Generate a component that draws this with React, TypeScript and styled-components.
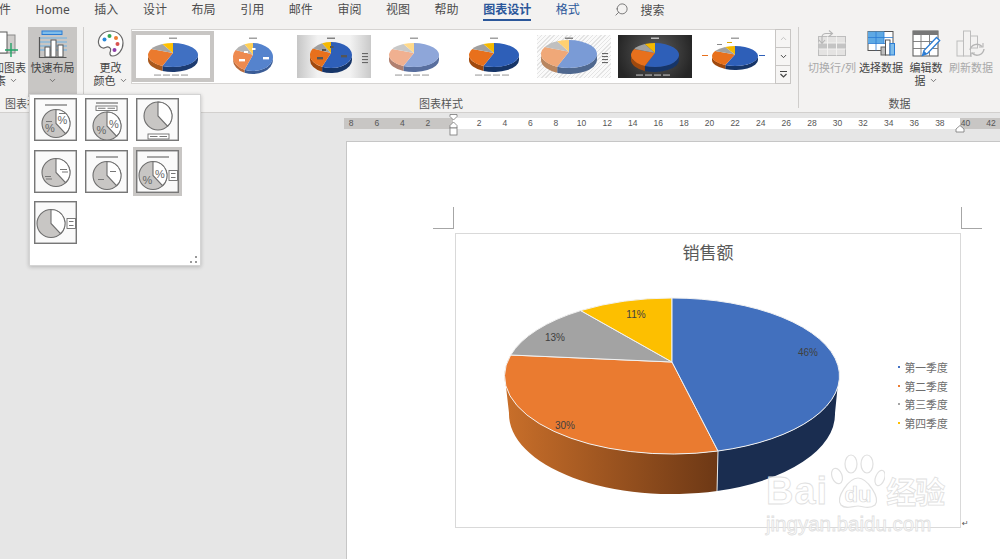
import React from "react";
import styled, { createGlobalStyle } from "styled-components";
import { ChevronDown, Search } from "lucide-react";

const GlobalStyle = createGlobalStyle`
  html, body {
    margin: 0;
    padding: 0;
    background: #e6e6e6;
    font-family: "Noto Sans", "Noto Sans CJK SC", sans-serif;
  }
`;

const Root = styled.div`
  position: relative;
  width: 1000px;
  height: 559px;
  overflow: hidden;
  display: flex;
  flex-direction: column;
  background: #e6e6e6;
`;

/* tabs */
const TabBar = styled.div`
  height: 27px;
  flex: none;
  display: flex;
  align-items: flex-start;
  gap: 24.6px;
  margin-left: -1px;
  background: #f3f2f1;
`;

const Tab = styled.div<{ $active?: boolean; $blue?: boolean }>`
  height: 19px;
  line-height: 19px;
  font-size: 12px;
  white-space: nowrap;
  color: ${(p) => (p.$active || p.$blue ? "#2b579a" : "#4d4d4d")};
  font-weight: ${(p) => (p.$active ? 600 : 400)};
  border-bottom: ${(p) => (p.$active ? "2.5px solid #2b579a" : "2.5px solid transparent")};
`;

const SearchBox = styled.div`
  display: flex;
  align-items: center;
  gap: 11px;
  height: 19px;
  margin-left: 10px;
  font-size: 12px;
  color: #4d4d4d;
  svg {
    transform: scaleX(-1);
    color: #6a6a6a;
  }
`;

/* ribbon */
const Ribbon = styled.div`
  height: 85px;
  flex: none;
  display: flex;
  background: #f3f2f1;
  border-bottom: 1px solid #d2d0ce;
`;

const Group = styled.div<{ $width: number }>`
  width: ${(p) => p.$width}px;
  flex: none;
  display: flex;
  flex-direction: column;
`;

const GroupBody = styled.div<{ $pad?: number }>`
  height: 70px;
  display: flex;
  align-items: flex-start;
  padding-left: ${(p) => p.$pad ?? 0}px;
`;

const GroupLabel = styled.div<{ $align?: string }>`
  height: 15px;
  line-height: 14px;
  font-size: 11px;
  color: #555;
  text-align: ${(p) => p.$align ?? "center"};
  padding-left: ${(p) => (p.$align === "left" ? 5 : 0)}px;
`;

const Divider = styled.div`
  width: 1px;
  height: 81px;
  flex: none;
  background: #cfcdcb;
`;

const ToolButton = styled.div<{ $width: number; $on?: boolean; $off?: boolean; $clip?: boolean }>`
  width: ${(p) => p.$width}px;
  height: ${(p) => (p.$on ? 70 : 66)}px;
  flex: none;
  display: flex;
  flex-direction: column;
  align-items: ${(p) => (p.$clip ? "flex-end" : "center")};
  padding-top: 3px;
  box-sizing: border-box;
  margin-left: ${(p) => (p.$clip ? -20 : 0)}px;
  background: ${(p) => (p.$on ? "#c8c6c4" : "transparent")};
  color: ${(p) => (p.$off ? "#a9a9a9" : "#444")};
`;

const IconSlot = styled.div<{ $clip?: boolean }>`
  height: 31px;
  display: flex;
  justify-content: center;
  align-self: ${(p) => (p.$clip ? "flex-start" : "center")};
`;

const ButtonLine = styled.div<{ $right?: number }>`
  display: flex;
  align-items: center;
  justify-content: center;
  gap: 3px;
  height: 13px;
  line-height: 13px;
  font-size: 11px;
  white-space: nowrap;
  margin-right: ${(p) => p.$right ?? 0}px;
  svg {
    color: #555;
  }
`;

/* style gallery */
const Gallery = styled.div`
  display: flex;
  margin: 2px 0 0 2px;
  height: 55px;
`;

const GalleryTrack = styled.div`
  width: 645px;
  box-sizing: border-box;
  display: flex;
  align-items: flex-start;
  gap: 6.3px;
  padding: 5px 0 0 4px;
  background: #fff;
  border: 1px solid #d6d4d2;
`;

const Thumb = styled.div<{ $bg: string; $selected?: boolean }>`
  width: 74px;
  height: 43px;
  flex: none;
  background: ${(p) => p.$bg};
  outline: ${(p) => (p.$selected ? "4px solid #c8c6c4" : "none")};
  svg {
    display: block;
  }
`;

const GalleryScroll = styled.div`
  width: 13px;
  display: flex;
  flex-direction: column;
`;

const ScrollButton = styled.div<{ $off?: boolean }>`
  flex: 1;
  display: flex;
  align-items: center;
  justify-content: center;
  margin-left: -1px;
  width: 14px;
  border: 1px solid #c8c6c4;
  border-top-width: ${(p) => (p.$off ? 1 : 0)}px;
  color: ${(p) => (p.$off ? "#b5b5b5" : "#444")};
  background: #f6f5f4;
`;

/* layout popup */
const LayoutPopup = styled.div`
  position: absolute;
  left: 29px;
  top: 94px;
  width: 172px;
  height: 172px;
  box-sizing: border-box;
  padding: 3px 4px;
  background: #fff;
  border: 1px solid #d4d4d4;
  box-shadow: 0 1px 4px rgba(0, 0, 0, 0.22);
  display: grid;
  grid-template-columns: repeat(3, 43px);
  grid-auto-rows: 43px;
  gap: 8.5px 8px;
  align-content: start;
`;

const LayoutItem = styled.div<{ $selected?: boolean }>`
  width: 43px;
  height: 43px;
  box-sizing: border-box;
  background: #fafafa;
  border: 1px solid #777;
  outline: ${(p) => (p.$selected ? "3px solid #c8c6c4" : "none")};
  box-shadow: inset 0 0 0 0.5px #888;
  svg {
    display: block;
  }
`;

const Grip = styled.div`
  position: absolute;
  right: 3px;
  bottom: 2px;
  width: 7px;
  height: 7px;
  background:
    radial-gradient(circle, #999 1px, transparent 1.2px) 5px 0 / 2px 2px no-repeat,
    radial-gradient(circle, #999 1px, transparent 1.2px) 0 5px / 2px 2px no-repeat,
    radial-gradient(circle, #999 1px, transparent 1.2px) 5px 5px / 2px 2px no-repeat;
`;

/* ruler */
const RulerBar = styled.div`
  position: relative;
  height: 28px;
  flex: none;
  padding: 5px 0 0 344px;
  box-sizing: border-box;
`;

const Ruler = styled.div`
  height: 11px;
  overflow: hidden;
  background: linear-gradient(90deg, #c8c6c4 109px, #fff 109px, #fff 616px, #c8c6c4 616px);
`;

const RulerScale = styled.div`
  display: flex;
  margin-left: -5.6px;
`;

const RulerCell = styled.div`
  width: 25.6px;
  flex: none;
  text-align: center;
  font-family: "Liberation Sans", sans-serif;
  font-size: 8.5px;
  line-height: 11px;
  color: #555;
`;

const RulerMark = styled.svg<{ $left: number; $top: number }>`
  position: absolute;
  left: ${(p) => p.$left}px;
  top: ${(p) => p.$top}px;
`;

/* page and chart */
const Workspace = styled.div`
  flex: 1;
  min-height: 0;
  padding-left: 346px;
`;

const Page = styled.div`
  height: 100%;
  box-sizing: border-box;
  padding: 65px 0 0 86px;
  background: #fff;
  border-left: 1px solid #c6c6c6;
  border-top: 1px solid #c6c6c6;
`;

const CornerRow = styled.div`
  width: 549px;
  display: flex;
  justify-content: space-between;
`;

const Corner = styled.div<{ $side: "left" | "right" }>`
  width: 20px;
  height: 21px;
  border-bottom: 1px solid #a6a6a6;
  border-${(p) => (p.$side === "left" ? "right" : "left")}: 1px solid #a6a6a6;
`;

const ChartRow = styled.div`
  display: flex;
  align-items: flex-end;
  margin: 4px 0 0 22px;
`;

const ChartFrame = styled.div`
  width: 506px;
  height: 295px;
  box-sizing: border-box;
  border: 1px solid #d9d9d9;
`;

const ChartTitle = styled.div`
  margin-top: 6px;
  height: 26px;
  line-height: 26px;
  text-align: center;
  font-size: 17px;
  color: #595959;
`;

const ChartBody = styled.div`
  display: flex;
  align-items: flex-start;
  margin-top: 24px;
  svg {
    display: block;
    flex: none;
  }
`;

const Legend = styled.div`
  margin: 68px 0 0 2px;
  display: flex;
  flex-direction: column;
`;

const LegendItem = styled.div<{ $color: string }>`
  display: flex;
  align-items: center;
  gap: 4.5px;
  height: 18.6px;
  font-size: 10.8px;
  color: #6e6e6e;
  white-space: nowrap;
  &::before {
    content: "";
    width: 2px;
    height: 2px;
    background: ${(p) => p.$color};
  }
`;

const PieLabel = styled.text`
  font-family: "Liberation Sans", sans-serif;
  font-size: 10px;
  fill: #404040;
  text-anchor: middle;
`;

const ReturnMark = styled.div`
  font-family: "DejaVu Sans", sans-serif;
  font-size: 8px;
  line-height: 9px;
  color: #555;
  margin-left: 1px;
`;

/* watermark */
const Watermark = styled.div`
  position: absolute;
  left: 766px;
  top: 452px;
  width: 182px;
  color: rgba(255, 255, 255, 0.55);
  -webkit-text-stroke: 0.8px #e0e0e0;
  pointer-events: none;
`;

const WatermarkTop = styled.div`
  display: flex;
  align-items: flex-end;
  height: 58px;
  svg {
    flex: none;
    margin: 0 1px 0 3px;
  }
`;

const WatermarkBai = styled.div`
  font-family: "Liberation Sans", sans-serif;
  font-weight: 700;
  font-size: 38px;
  line-height: 38px;
  letter-spacing: 1px;
`;

const WatermarkJing = styled.div`
  font-size: 30px;
  line-height: 36px;
  font-weight: 700;
  letter-spacing: -1px;
  white-space: nowrap;
`;

const WatermarkUrl = styled.div`
  margin-top: 3px;
  font-family: "Liberation Sans", sans-serif;
  font-size: 20.5px;
  line-height: 22px;
  white-space: nowrap;
`;

/* drawing helpers */
const pt = (cx: number, cy: number, rx: number, ry: number, a: number) => {
  const r = (a * Math.PI) / 180;
  return [cx + rx * Math.sin(r), cy - ry * Math.cos(r)];
};

// the apex sits above the ellipse centre, like the tilted pie in the big chart
const slicePath = (cx: number, cy: number, rx: number, ry: number, a0: number, a1: number) => {
  const [x0, y0] = pt(cx, cy, rx, ry, a0);
  const [x1, y1] = pt(cx, cy, rx, ry, a1);
  const apex = cy - ry * 0.16;
  return `M${cx} ${apex}L${x0} ${y0}A${rx} ${ry} 0 ${a1 - a0 > 180 ? 1 : 0} 1 ${x1} ${y1}Z`;
};

const sidePath = (cx: number, cy: number, rx: number, ry: number, d: number, a0: number, a1: number) => {
  const [x0, y0] = pt(cx, cy, rx, ry, a0);
  const [x1, y1] = pt(cx, cy, rx, ry, a1);
  return `M${x0} ${y0}A${rx} ${ry} 0 0 1 ${x1} ${y1}L${x1} ${y1 + d}A${rx} ${ry} 0 0 0 ${x0} ${y0 + d}Z`;
};

type ThumbSpec = {
  bg: string;
  cx: number;
  cy: number;
  rx: number;
  ry: number;
  depth: number;
  colors: string[];
  sides: string[];
  text: string;
  legend: "bottom" | "right" | "none" | "sides";
  boxes?: string;
  selected?: boolean;
};

const solid = ["#3f6fc2", "#ea7a2f", "#a5a5a5", "#ffc000"];
const solidSide = ["#1f3a70", "#a9591f"];
const deep = ["#2f5fb8", "#e8701a", "#a0a0a0", "#f4b800"];
const deepSide = ["#173468", "#a04a10"];

const thumbs: ThumbSpec[] = [
  { bg: "#fff", cx: 37, cy: 20, rx: 25, ry: 12, depth: 5, colors: solid, sides: solidSide, text: "#8a8a8a", legend: "bottom", selected: true },
  { bg: "#fff", cx: 37, cy: 22, rx: 20, ry: 14, depth: 3, colors: ["#5583cd", "#ee8a50", "#b5b5b5", "#ffcf55"], sides: ["#3a5c96", "#b96a3a"], text: "#8a8a8a", legend: "none", boxes: "#fff" },
  { bg: "linear-gradient(90deg, #c6c6c6, #f2f2f2 28%, #f2f2f2 72%, #c9c9c9)", cx: 34, cy: 20, rx: 21, ry: 13, depth: 5, colors: deep, sides: deepSide, text: "#666", legend: "right", boxes: "#555" },
  { bg: "#fff", cx: 37, cy: 20, rx: 25, ry: 12, depth: 5, colors: ["#8ea6d9", "#f0b090", "#c8c8c8", "#ffd98a"], sides: ["#586e9e", "#b08070"], text: "#8a8a8a", legend: "bottom" },
  { bg: "#fff", cx: 37, cy: 20, rx: 25, ry: 12, depth: 5, colors: deep, sides: deepSide, text: "#8a8a8a", legend: "bottom" },
  { bg: "repeating-linear-gradient(135deg, #e4e4e4 0 1px, #fafafa 1px 3px)", cx: 32, cy: 19, rx: 28, ry: 14, depth: 6, colors: ["#7a9bd6", "#f0a878", "#c0c0c0", "#ffd070"], sides: ["#50688f", "#b88660"], text: "#666", legend: "right" },
  { bg: "radial-gradient(circle at 50% 40%, #5c5c5c, #262626 85%)", cx: 37, cy: 20, rx: 24, ry: 12, depth: 5, colors: deep, sides: deepSide, text: "#ddd", legend: "bottom" },
  { bg: "#fff", cx: 37, cy: 21, rx: 23, ry: 10, depth: 4, colors: deep, sides: deepSide, text: "#8a8a8a", legend: "sides" },
];

const MiniChart = ({ spec }: { spec: ThumbSpec }) => {
  const { cx, cy, rx, ry, depth, colors, sides, text, legend, boxes } = spec;
  const angles = [0, 205, 300, 335, 360];
  return (
    <svg width="74" height="43" viewBox="0 0 74 43">
      <defs>
        <filter id="soft" x="-10%" y="-10%" width="120%" height="120%">
          <feGaussianBlur stdDeviation="0.3" />
        </filter>
      </defs>
      <g filter="url(#soft)">
        <rect x={cx - 4} y="2.6" width="8" height="1.2" fill={text} />
        <path d={sidePath(cx, cy, rx, ry, depth, 90, 205)} fill={sides[0]} />
        <path d={sidePath(cx, cy, rx, ry, depth, 205, 270)} fill={sides[1]} />
        {colors.map((c, i) => (
          <path key={c} d={slicePath(cx, cy, rx, ry, angles[i], angles[i + 1])} fill={c} />
        ))}
        {boxes && (
          <g fill={boxes}>
            <rect x={cx + 10} y={cy} width="6" height="2.4" />
            <rect x={cx - 14} y={cy + 2} width="6" height="2.4" />
            <rect x={cx - 9} y={cy - 6} width="4" height="2" />
            <rect x={cx - 1} y={cy - 9} width="3.5" height="2" />
          </g>
        )}
        {legend === "bottom" &&
          [18, 27, 36, 45].map((x) => <rect key={x} x={x} y="39.6" width="7" height="0.9" fill={text} />)}
        {legend === "right" &&
          [18, 21, 24, 27].map((y) => <rect key={y} x="65" y={y} width="6" height="1.1" fill={text} />)}
        {legend === "sides" && (
          <g fill={text}>
            <rect x="4" y="20" width="6" height="1" fill="#e8701a" />
            <rect x="61" y="20" width="6" height="1" fill="#2f5fb8" />
            <rect x="19" y="9" width="5" height="1" />
            <rect x="29" y="7" width="5" height="1" fill="#e0a800" />
          </g>
        )}
      </g>
    </svg>
  );
};

/* layout gallery glyphs */
const frameColor = "#6e6e6e";

const PieGlyph = ({ cx, cy, r = 14 }: { cx: number; cy: number; r?: number }) => {
  const a = (137 * Math.PI) / 180;
  return (
    <>
      <circle cx={cx} cy={cy} r={r} fill="#c8c6c4" stroke={frameColor} strokeWidth="1.1" />
      <path
        d={`M${cx} ${cy}L${cx} ${cy - r}A${r} ${r} 0 0 1 ${cx + r * Math.sin(a)} ${cy - r * Math.cos(a)}Z`}
        fill="#fff"
        stroke={frameColor}
        strokeWidth="1.1"
      />
    </>
  );
};

const TitleBar = ({ y = 5 }: { y?: number }) => <rect x="10" y={y} width="22" height="2" fill="#a6a6a6" />;

const Pct = ({ x, y }: { x: number; y: number }) => (
  <text x={x} y={y} fontFamily="Liberation Sans, sans-serif" fontSize="11" fill="#666" textAnchor="middle">
    %
  </text>
);

const LegendBox = ({ x, y, w, h, tall }: { x: number; y: number; w: number; h: number; tall?: boolean }) => (
  <g>
    <rect x={x} y={y} width={w} height={h} fill="#fff" stroke={frameColor} strokeWidth="0.9" />
    {tall ? (
      <g fill="#777">
        <rect x={x + 2} y={y + 2.5} width={w - 4} height="1" />
        <rect x={x + 2} y={y + h - 3.5} width={w - 4} height="1" />
      </g>
    ) : (
      <g fill="#777">
        <rect x={x + 2} y={y + h / 2 - 0.5} width={w / 2 - 3} height="1" />
        <rect x={x + w / 2 + 1} y={y + h / 2 - 0.5} width={w / 2 - 3} height="1" />
      </g>
    )}
  </g>
);

const layoutGlyphs: React.ReactNode[] = [
  <>
    <TitleBar />
    <PieGlyph cx={21} cy={24.5} />
    <Pct x={15} y={33} />
    <Pct x={27.5} y={25} />
    <rect x="11" y="22" width="6" height="1" fill="#777" />
    <rect x="24" y="14" width="6" height="1" fill="#777" />
  </>,
  <>
    <TitleBar y={3} />
    <LegendBox x={10} y={7} w={21} h={4.5} />
    <PieGlyph cx={21} cy={27} />
    <Pct x={15.5} y={35} />
    <Pct x={28} y={29} />
  </>,
  <>
    <PieGlyph cx={21} cy={17} />
    <LegendBox x={11} y={35} w={21} h={5} />
  </>,
  <>
    <PieGlyph cx={21} cy={21.5} />
    <rect x="25" y="18" width="7" height="1" fill="#777" />
    <rect x="27" y="20.5" width="6" height="1" fill="#777" />
    <rect x="10" y="25" width="6" height="1" fill="#777" />
    <rect x="11" y="27.5" width="6" height="1" fill="#777" />
  </>,
  <>
    <TitleBar />
    <PieGlyph cx={21} cy={24.5} />
    <rect x="24" y="20" width="6" height="1" fill="#777" />
    <rect x="12" y="28" width="6" height="1" fill="#777" />
  </>,
  <>
    <TitleBar />
    <PieGlyph cx={16} cy={24.5} />
    <Pct x={10.5} y={33} />
    <Pct x={23} y={27} />
    <LegendBox x={32} y={19.5} w={8.5} h={10} tall />
  </>,
  <>
    <PieGlyph cx={16} cy={21.5} />
    <LegendBox x={32} y={16.5} w={8.5} h={10} tall />
  </>,
];

/* ribbon icons */
const AddElementIcon = () => (
  <svg width="40" height="30" viewBox="0 0 40 30">
    <rect x="20" y="5" width="15" height="18" fill="#cfcdcb" stroke="#8a8a8a" />
    <rect x="10" y="2" width="17" height="21" fill="#fff" stroke="#5a5a5a" />
    <path d="M31 13v14M25 20h13" stroke="#21a366" strokeWidth="1.4" fill="none" />
  </svg>
);

const QuickLayoutIcon = () => (
  <svg width="30" height="29" viewBox="0 0 30 29">
    <rect x="4" y="1" width="20" height="3.5" fill="#7fbdea" stroke="#2b7cd3" />
    <path d="M2 8h27M2 12h27M2 16h27M2 20h27" stroke="#6cb2e6" strokeWidth="1.2" />
    <path d="M1.5 7v20.5h27" stroke="#555" strokeWidth="1.2" fill="none" />
    <rect x="7" y="17" width="5" height="10" fill="#fff" stroke="#555" />
    <rect x="13" y="10" width="5" height="17" fill="#fff" stroke="#555" />
    <rect x="20" y="15" width="5" height="12" fill="#fff" stroke="#555" />
  </svg>
);

const PaletteIcon = () => (
  <svg width="27" height="27" viewBox="0 0 27 27">
    <path
      d="M13.5 1C20.5 1 26 6 26 13C26 20 21 26 15.5 26C12.5 26 12.5 23 13.5 21C14.5 18 11.5 16 8.5 17.5C5.5 19 2 17 1.5 13C1 6 7 1 13.5 1Z"
      fill="#fff"
      stroke="#666"
      strokeWidth="1.2"
    />
    <circle cx="7.5" cy="9.5" r="2" fill="#2b88d8" />
    <circle cx="12.5" cy="6" r="2" fill="#33a853" />
    <circle cx="19" cy="8" r="2" fill="#ed7d31" />
    <circle cx="20.5" cy="14" r="2" fill="#d9534f" />
    <circle cx="17.5" cy="20" r="2" fill="#8e3ea8" />
  </svg>
);

const SwitchRowIcon = () => (
  <svg width="30" height="26" viewBox="0 0 30 26">
    <rect x="1.5" y="6.5" width="27" height="19" fill="#e4e3e2" stroke="#bdbdbd" />
    <rect x="1.5" y="13" width="27" height="6" fill="#c4c4c4" />
    <path d="M1.5 13h27M1.5 19h27M10.5 6.5v19M19.5 6.5v19" stroke="#f3f2f1" />
    <path d="M5 13V7c0-2 2-3.5 4-3.5h6M12 .5l3.5 3-3.5 3M2 10l3 3.5L8 10" stroke="#b5b5b5" strokeWidth="1.1" fill="none" />
  </svg>
);

const SelectDataIcon = () => (
  <svg width="29" height="26" viewBox="0 0 29 26">
    <rect x="1" y="1.5" width="25" height="19" fill="#fff" stroke="#555" />
    <rect x="1" y="1.5" width="16" height="12" fill="#5ea9e4" />
    <path d="M1 7.5h25M1 13.5h25M9 1.5v19M17 1.5v12" stroke="#2b7cd3" strokeWidth="0.8" />
    <rect x="14" y="17" width="4.5" height="8" fill="#bdbdbd" stroke="#666" />
    <rect x="18.5" y="10" width="4.5" height="15" fill="#fff" stroke="#555" />
    <rect x="23" y="13.5" width="4.5" height="11.5" fill="#7fbdea" stroke="#2b7cd3" />
  </svg>
);

const EditDataIcon = () => (
  <svg width="29" height="28" viewBox="0 0 29 28">
    <rect x="1" y="1" width="25" height="25" fill="#fff" stroke="#555" />
    <rect x="1" y="1" width="25" height="4" fill="#777" />
    <path d="M1 11.5h25M1 18.5h25M9 5v21M17.5 5v21" stroke="#777" strokeWidth="0.9" />
    <path d="M24.5 7.5l3.2 3-12.2 13-5 2 1.5-5z" fill="#fff" stroke="#2b7cd3" strokeWidth="1.3" />
    <path d="M11.8 20.8l3.4 3-4.4 1.7z" fill="#2b7cd3" />
  </svg>
);

const RefreshDataIcon = () => (
  <svg width="30" height="27" viewBox="0 0 30 27">
    <rect x="1" y="11" width="6.5" height="15" fill="#f3f2f1" stroke="#bdbdbd" />
    <rect x="7.5" y="1" width="7" height="25" fill="#f3f2f1" stroke="#bdbdbd" />
    <rect x="14.5" y="6" width="7" height="12" fill="#f3f2f1" stroke="#bdbdbd" />
    <path d="M14 20a7 7 0 0 1 12-3.5M28 19a7 7 0 0 1-12 4" fill="none" stroke="#b5b5b5" strokeWidth="1.4" />
    <path d="M27 13v4h-4M15 27v-4h4" fill="none" stroke="#b5b5b5" strokeWidth="1.1" />
  </svg>
);

/* big chart */
const MainPie = () => (
  <svg width="440" height="210" viewBox="456 290 440 210">
    <defs>
      <linearGradient id="orangeSide" x1="505" x2="718" y1="0" y2="0" gradientUnits="userSpaceOnUse">
        <stop offset="0" stopColor="#c96f2a" />
        <stop offset="1" stopColor="#6d3815" />
      </linearGradient>
    </defs>
    <path d="M505 378A167.5 78 0 0 0 718 451L717 491A163 80 0 0 1 509 413Z" fill="url(#orangeSide)" />
    <path d="M837.5 388A167.5 78 0 0 1 718 451L717 491A163 80 0 0 0 835 413Z" fill="#1a2d50" />
    <path d="M718 451L717 491" stroke="#e8e8e8" strokeWidth="1" />
    <g stroke="#f2f2f2" strokeWidth="1">
      <path d="M672 362L718 451A167.5 78 0 0 1 510.7 355Z" fill="#ea7b30" />
      <path d="M672 362L510.7 355A167.5 78 0 0 1 580.7 310.6Z" fill="#a3a3a3" />
      <path d="M672 362L580.7 310.6A167.5 78 0 0 1 672 298Z" fill="#fdbf00" />
      <path d="M672 362L672 298A167.5 78 0 0 1 718 451Z" fill="#4270be" />
    </g>
    <PieLabel x="808" y="356">46%</PieLabel>
    <PieLabel x="565" y="429">30%</PieLabel>
    <PieLabel x="555" y="341">13%</PieLabel>
    <PieLabel x="636" y="318">11%</PieLabel>
  </svg>
);

const Paw = () => (
  <svg width="54" height="56" viewBox="0 0 54 56">
    <g fill="rgba(255,255,255,0.5)" stroke="#e0e0e0" strokeWidth="1.2">
      <ellipse cx="6" cy="22" rx="5" ry="8" transform="rotate(-20 6 22)" />
      <ellipse cx="20" cy="10" rx="6" ry="9" />
      <ellipse cx="36" cy="10" rx="6" ry="9" />
      <ellipse cx="49" cy="24" rx="4.5" ry="8" transform="rotate(20 49 24)" />
      <path d="M27 24C36 24 50 44 44 51C38 56 32 52 27 52C22 52 15 56 10 51C4 44 18 24 27 24Z" />
    </g>
    <text x="27" y="48" textAnchor="middle" fontFamily="Liberation Sans, sans-serif" fontWeight="700" fontSize="22" fill="rgba(255,255,255,0.4)" stroke="#d8d8d8" strokeWidth="0.7">
      du
    </text>
  </svg>
);

const rulerLabels = ["8", "6", "4", "2", "", "2", "4", "6", "8", "10", "12", "14", "16", "18", "20", "22", "24", "26", "28", "30", "32", "34", "36", "38", "40", "42"];
const legendRows = [
  { name: "第一季度", color: "#4472c4" },
  { name: "第二季度", color: "#ed7d31" },
  { name: "第三季度", color: "#a5a5a5" },
  { name: "第四季度", color: "#ffc000" },
];

const Chev = () => <ChevronDown size={9} strokeWidth={2} />;

export default function App() {
  return (
    <Root>
      <GlobalStyle />
      <TabBar>
        <Tab>件</Tab>
        <Tab>Home</Tab>
        <Tab>插入</Tab>
        <Tab>设计</Tab>
        <Tab>布局</Tab>
        <Tab>引用</Tab>
        <Tab>邮件</Tab>
        <Tab>审阅</Tab>
        <Tab>视图</Tab>
        <Tab>帮助</Tab>
        <Tab $active>图表设计</Tab>
        <Tab $blue>格式</Tab>
        <SearchBox>
          <Search size={15} strokeWidth={1.4} />
          搜索
        </SearchBox>
      </TabBar>

      <Ribbon>
        <Group $width={83}>
          <GroupBody>
            <ToolButton $width={48} $clip>
              <IconSlot $clip>
                <AddElementIcon />
              </IconSlot>
              <ButtonLine $right={2}>添加图表</ButtonLine>
              <ButtonLine $right={10}>
                元素 <Chev />
              </ButtonLine>
            </ToolButton>
            <ToolButton $width={49} $on>
              <IconSlot>
                <QuickLayoutIcon />
              </IconSlot>
              <ButtonLine>快速布局</ButtonLine>
              <ButtonLine>
                <Chev />
              </ButtonLine>
            </ToolButton>
          </GroupBody>
          <GroupLabel $align="left">图表布局</GroupLabel>
        </Group>
        <Divider />
        <Group $width={714}>
          <GroupBody $pad={8}>
            <ToolButton $width={37}>
              <IconSlot>
                <PaletteIcon />
              </IconSlot>
              <ButtonLine>更改</ButtonLine>
              <ButtonLine>
                颜色 <Chev />
              </ButtonLine>
            </ToolButton>
            <Gallery>
              <GalleryTrack>
                {thumbs.map((t, i) => (
                  <Thumb key={i} $bg={t.bg} $selected={t.selected}>
                    <MiniChart spec={t} />
                  </Thumb>
                ))}
              </GalleryTrack>
              <GalleryScroll>
                <ScrollButton $off>
                  <ChevronDown size={9} style={{ transform: "rotate(180deg)" }} />
                </ScrollButton>
                <ScrollButton>
                  <ChevronDown size={9} strokeWidth={2.6} />
                </ScrollButton>
                <ScrollButton>
                  <svg width="9" height="9" viewBox="0 0 9 9">
                    <path d="M1 1.5h7M1.5 4l3 3 3-3" fill="none" stroke="#444" strokeWidth="1.2" />
                  </svg>
                </ScrollButton>
              </GalleryScroll>
            </Gallery>
          </GroupBody>
          <GroupLabel>图表样式</GroupLabel>
        </Group>
        <Divider />
        <Group $width={201}>
          <GroupBody $pad={8}>
            <ToolButton $width={50} $off>
              <IconSlot>
                <SwitchRowIcon />
              </IconSlot>
              <ButtonLine>切换行/列</ButtonLine>
            </ToolButton>
            <ToolButton $width={48}>
              <IconSlot>
                <SelectDataIcon />
              </IconSlot>
              <ButtonLine>选择数据</ButtonLine>
            </ToolButton>
            <ToolButton $width={42}>
              <IconSlot>
                <EditDataIcon />
              </IconSlot>
              <ButtonLine>编辑数</ButtonLine>
              <ButtonLine>
                据 <Chev />
              </ButtonLine>
            </ToolButton>
            <ToolButton $width={48} $off>
              <IconSlot>
                <RefreshDataIcon />
              </IconSlot>
              <ButtonLine>刷新数据</ButtonLine>
            </ToolButton>
          </GroupBody>
          <GroupLabel>数据</GroupLabel>
        </Group>
      </Ribbon>

      <RulerBar>
        <Ruler>
          <RulerScale>
            {rulerLabels.map((n, i) => (
              <RulerCell key={i}>{n}</RulerCell>
            ))}
          </RulerScale>
        </Ruler>
        <RulerMark $left={449} $top={1} width="9" height="23" viewBox="0 0 9 23">
          <path d="M1 .5h7v2L4.5 6 1 2.5z" fill="#fff" stroke="#777" strokeWidth="0.8" />
          <path d="M4.5 8L8 11.5V14H1v-2.5z" fill="#fff" stroke="#777" strokeWidth="0.8" />
          <rect x="1" y="14" width="7" height="7" fill="#fff" stroke="#777" strokeWidth="0.8" />
        </RulerMark>
        <RulerMark $left={955} $top={12} width="10" height="8" viewBox="0 0 10 8">
          <path d="M5 .5L9 4v3H1V4z" fill="#fff" stroke="#777" strokeWidth="0.8" />
        </RulerMark>
      </RulerBar>

      <Workspace>
        <Page>
          <CornerRow>
            <Corner $side="left" />
            <Corner $side="right" />
          </CornerRow>
          <ChartRow>
            <ChartFrame>
              <ChartTitle>销售额</ChartTitle>
              <ChartBody>
                <MainPie />
                <Legend>
                  {legendRows.map((r) => (
                    <LegendItem key={r.name} $color={r.color}>
                      {r.name}
                    </LegendItem>
                  ))}
                </Legend>
              </ChartBody>
            </ChartFrame>
            <ReturnMark>↵</ReturnMark>
          </ChartRow>
        </Page>
      </Workspace>

      <LayoutPopup>
        {layoutGlyphs.map((g, i) => (
          <LayoutItem key={i} $selected={i === 5}>
            <svg width="41" height="41" viewBox="0 0 41 41">
              {g}
            </svg>
          </LayoutItem>
        ))}
        <Grip />
      </LayoutPopup>

      <Watermark>
        <WatermarkTop>
          <WatermarkBai>Bai</WatermarkBai>
          <Paw />
          <WatermarkJing>经验</WatermarkJing>
        </WatermarkTop>
        <WatermarkUrl>jingyan.baidu.com</WatermarkUrl>
      </Watermark>
    </Root>
  );
}
